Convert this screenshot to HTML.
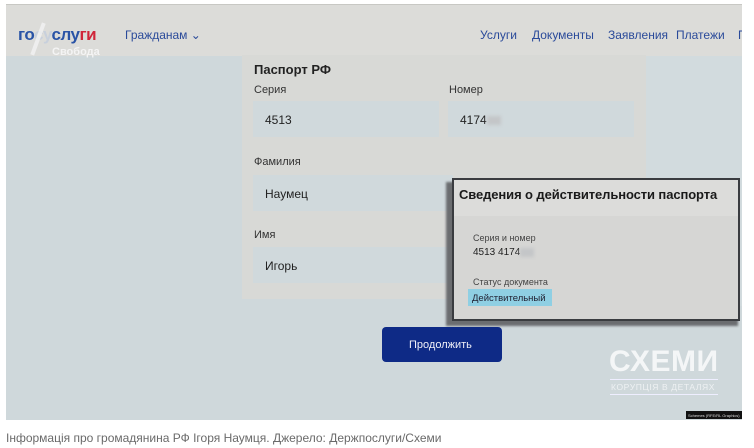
<!DOCTYPE html>
<html><head><meta charset="utf-8"><style>
*{margin:0;padding:0;box-sizing:border-box}
body{width:754px;height:448px;background:#fff;position:relative;overflow:hidden;font-family:"Liberation Sans","Noto Sans CJK SC",sans-serif}
.a{position:absolute}
.shot{left:6px;top:4px;width:736px;height:416px;background:#cfd8db;overflow:hidden}
.hdr{left:0;top:0;width:736px;height:52px;background:#dcdcd9;border-top:1px solid #c8c8c4}
.nav{color:#2a4a9a;font-size:12px;top:24px}
.card{left:236px;top:51px;width:404px;height:244px;background:#d8d9d6}
.lbl{font-size:11px;color:#333}
.inp{background:#d0d9dc;height:36px;font-size:12px;color:#222;padding:12px 0 0 12px}
.blur{display:inline-block;width:14px;height:9px;background:#c4c6c8;filter:blur(1.5px);vertical-align:middle}
</style></head><body>
<div class="a shot">
 <div class="a hdr"></div>
 <div class="a" style="left:12px;top:21px;font-size:17px;font-weight:bold;color:#2953a6;letter-spacing:-0.5px">го<span style="color:#c8d0dc">су</span>слу<span style="color:#d0263a">ги</span></div>
 <div class="a" style="left:46px;top:42px;font-size:11px;font-weight:bold;color:#f4f4f4">Свобода</div>
 <div class="a" style="left:30px;top:18px;width:4px;height:34px;background:#f2f2f2;transform:rotate(20deg);opacity:.8"></div>
 <div class="a nav" style="left:119px">Гражданам ⌄</div>
 <div class="a nav" style="left:474px">Услуги</div>
 <div class="a nav" style="left:526px">Документы</div>
 <div class="a nav" style="left:602px">Заявления</div>
 <div class="a nav" style="left:670px">Платежи</div>
 <div class="a nav" style="left:732px">П</div>
 <div class="a" style="left:640px;top:52px;width:96px;height:250px;background:#d2dbde"></div>
 <div class="a card"></div>
 <div class="a" style="left:248px;top:58px;font-size:13px;font-weight:bold;color:#222">Паспорт РФ</div>
 <div class="a lbl" style="left:248px;top:80px">Серия</div>
 <div class="a lbl" style="left:443px;top:80px">Номер</div>
 <div class="a inp" style="left:247px;top:97px;width:186px">4513</div>
 <div class="a inp" style="left:442px;top:97px;width:186px">4174<span class="blur"></span></div>
 <div class="a lbl" style="left:248px;top:152px">Фамилия</div>
 <div class="a inp" style="left:247px;top:171px;width:200px">Наумец</div>
 <div class="a lbl" style="left:248px;top:225px">Имя</div>
 <div class="a inp" style="left:247px;top:243px;width:200px">Игорь</div>
 <div class="a" style="left:440px;top:178px;width:292px;height:144px;background:#6b6d70;filter:blur(1px)"></div>
 <div class="a" style="left:446px;top:174px;width:288px;height:143px;background:#d6d6d4;border:2px solid #3a3c40">
  <div style="height:36px;background:#dcdcda;padding:7px 0 0 5px;font-size:13px;font-weight:bold;color:#1a1a1a;white-space:nowrap;letter-spacing:-0.1px">Сведения о действительности паспорта</div>
  <div style="position:absolute;left:19px;top:53px;font-size:9px;color:#444">Серия и номер</div>
  <div style="position:absolute;left:19px;top:67px;font-size:10px;color:#222">4513 4174<span class="blur"></span></div>
  <div style="position:absolute;left:19px;top:97px;font-size:9px;color:#444">Статус документа</div>
  <div style="position:absolute;left:14px;top:109px;width:84px;height:17px;background:#8fcfe3;font-size:9.5px;color:#223;padding:4px 0 0 4px">Действительный</div>
 </div>
 <div class="a" style="left:376px;top:323px;width:120px;height:35px;background:#0e2a86;border-radius:4px;color:#f0f0f8;font-size:11px;padding:12px 0 0 27px">Продолжить</div>
 <div class="a" style="left:603px;top:341px;font-size:30px;font-weight:bold;color:#f4f6f7;letter-spacing:0.5px">СХЕМИ</div>
 <div class="a" style="left:604px;top:375px;width:108px;height:1px;background:#eef"></div>
 <div class="a" style="left:605px;top:378px;font-size:8.5px;color:#eef1f3;letter-spacing:0.6px">КОРУПЦІЯ В ДЕТАЛЯХ</div>
 <div class="a" style="left:604px;top:390px;width:108px;height:1px;background:#eef"></div>
 <div class="a" style="left:680px;top:407px;width:56px;height:8px;background:#111;color:#ddd;font-size:4px;padding:2px">Schemes (RFE/RL Graphics)</div>
</div>
<div class="a" style="left:6px;top:431px;font-size:12px;color:#6a6a6a">Інформація про громадянина РФ Ігоря Наумця. Джерело: Держпослуги/Схеми</div>
</body></html>
